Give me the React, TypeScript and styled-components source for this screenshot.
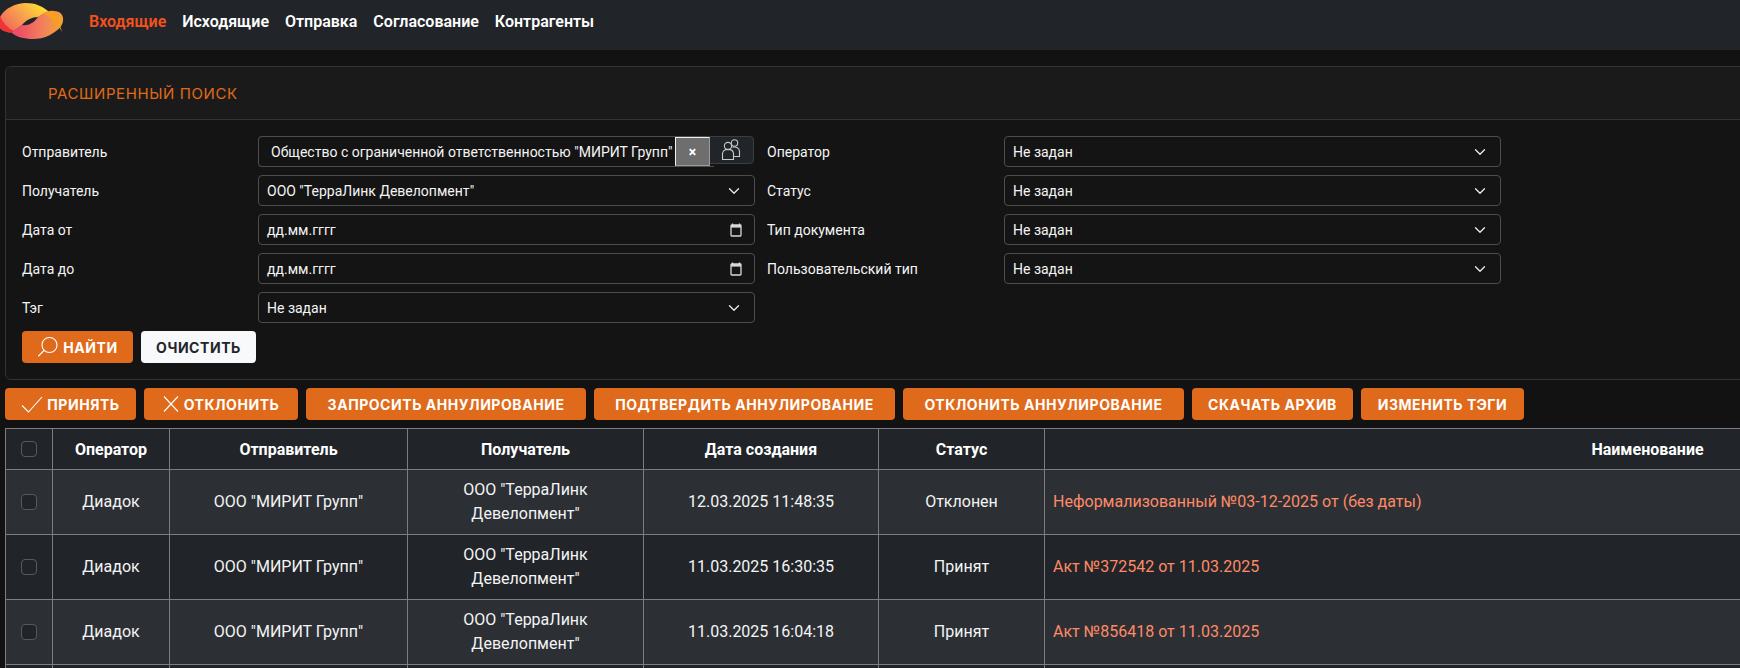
import React from "react";
import styled, { createGlobalStyle } from "styled-components";

const Global = createGlobalStyle`
  html, body { margin: 0; padding: 0; background: #121212; overflow: hidden; height: 100%; }
  body { font-family: Roboto, "Liberation Sans", sans-serif; font-size: 14px; color: #fff; }
  * { box-sizing: border-box; }
`;

const Page = styled.div`
  width: 2260px;
`;

const Navbar = styled.nav`
  height: 50px;
  background: #212529;
  display: flex;
  align-items: center;
`;

const LogoSvg = styled.svg`
  width: 65px;
  height: 40px;
  margin: 0 24px 10px 0;
  flex: none;
`;

const NavList = styled.div`
  display: flex;
  gap: 16px;
  margin-top: -6px;
`;

const NavLink = styled.a<{ $active?: boolean }>`
  font-size: 16px;
  font-weight: 600;
  line-height: 20px;
  color: ${(p) => (p.$active ? "#f4511e" : "#ffffff")};
`;

const Main = styled.main`
  padding: 16px 0 0 5px;
`;

const Card = styled.section`
  border: 1px solid #333333;
  border-radius: 6px 0 0 6px;
  background: #141414;
  height: 314px;
`;

const CardHeader = styled.header`
  height: 53px;
  background: #1a1a1a;
  border-bottom: 1px solid #333333;
  border-radius: 6px 0 0 0;
  padding-left: 42px;
  display: flex;
  align-items: center;
`;

const CardTitle = styled.h2`
  margin: 0;
  font-family: Inter, sans-serif;
  font-weight: 400;
  font-size: 15px;
  letter-spacing: 0.6px;
  color: #e06a1b;
`;

const CardBody = styled.div`
  padding: 16px 0 0 16px;
`;

const FormGrid = styled.div`
  display: grid;
  grid-template-columns: 236px 496.500px 12.500px 237px 496.500px;
  grid-auto-rows: 31px;
  row-gap: 8px;
  align-items: center;
`;

const Label = styled.label<{ $col?: number }>`
  grid-column: ${(p) => p.$col ?? 1};
  font-size: 14px;
  line-height: 20px;
  color: #f4f4f4;
`;

const Select = styled.div<{ $col?: number }>`
  grid-column: ${(p) => p.$col ?? 2};
  height: 31px;
  border: 1px solid #4d4d4d;
  border-radius: 4px;
  background: #141414;
  padding: 0 14px 0 8px;
  display: flex;
  align-items: center;
  justify-content: space-between;
  font-size: 14px;
  color: #f4f4f4;
`;

const DateField = styled(Select)`
  padding-right: 12px;
`;

const Sender = styled.div`
  grid-column: 2;
  height: 31px;
  display: flex;
  position: relative;
`;

const SenderInput = styled.div`
  width: 456px;
  height: 31px;
  border: 1px solid #4d4d4d;
  border-right: none;
  border-radius: 4px 0 0 4px;
  display: flex;
  align-items: center;
  padding-left: 12px;
  font-size: 14px;
  color: #f4f4f4;
  white-space: nowrap;
  overflow: hidden;
`;

const ClearBox = styled.span`
  position: absolute;
  left: 417px;
  top: 1px;
  width: 35px;
  height: 29px;
  background: #6e6e6e;
  border: 1.5px solid;
  border-color: #f2f2f2 #9a9a9a #9a9a9a #f2f2f2;
  color: #fff;
  font-size: 14px;
  font-weight: 700;
  display: flex;
  align-items: center;
  justify-content: center;
`;

const PeopleButton = styled.span`
  width: 47px;
  margin-left: -7px;
  height: 28px;
  background: #212529;
  border: 1px solid #3a3d42;
  border-radius: 0 4px 4px 0;
  display: flex;
  align-items: center;
  justify-content: center;
  position: relative;
  z-index: 0;
`;

const ButtonRow = styled.div<{ $top?: number }>`
  display: flex;
  gap: 8px;
  margin-top: ${(p) => p.$top ?? 0}px;
`;

const Button = styled.button<{ $light?: boolean; $w: number }>`
  width: ${(p) => p.$w}px;
  height: 32px;
  border: none;
  border-radius: 4px;
  background: ${(p) => (p.$light ? "#f8f9fa" : "#e06a1b")};
  color: ${(p) => (p.$light ? "#212529" : "#ffffff")};
  font-family: Inter, sans-serif;
  font-weight: 700;
  font-size: 14px;
  letter-spacing: 0.55px;
  padding: 0;
  display: flex;
  align-items: center;
  justify-content: center;
  gap: 3px;
  white-space: nowrap;
`;

const ActionRow = styled(ButtonRow)`
  margin-top: 8px;
`;

const Table = styled.table`
  margin-top: 8px;
  width: 2246px;
  border-collapse: collapse;
  table-layout: fixed;
`;

const Th = styled.th<{ $w?: number }>`
  width: ${(p) => (p.$w ? `${p.$w}px` : "auto")};
  height: 41px;
  background: #212529;
  border: 1px solid #7b7d80;
  font-size: 16px;
  font-weight: 700;
  text-align: center;
  color: #fff;
  padding: 0 8px;
`;

const Row = styled.tr<{ $alt?: boolean }>`
  background: ${(p) => (p.$alt ? "#2c3035" : "#212529")};
`;

const Td = styled.td<{ $link?: boolean }>`
  height: 65px;
  border: 1px solid #7b7d80;
  padding: 8px;
  font-size: 16px;
  line-height: 24px;
  text-align: ${(p) => (p.$link ? "left" : "center")};
  color: ${(p) => (p.$link ? "#ff8a65" : "#f4f4f4")};
`;

const CheckBox = styled.span`
  display: block;
  width: 16px;
  height: 16px;
  margin: 0 auto;
  border: 1px solid #55585c;
  border-radius: 4px;
  background: #212529;
`;

const Chevron = () => (
  <svg width="12" height="12" viewBox="0 0 16 16" fill="none" stroke="#e8e8e8" strokeWidth="1.8" strokeLinecap="round" strokeLinejoin="round">
    <path d="M2 5l6 6 6-6" />
  </svg>
);

const Calendar = () => (
  <svg width="12" height="14" viewBox="0 0 12 14" fill="none">
    <path d="M2.500 0.500v2M9.500 0.500v2" stroke="#d8d8d8" strokeWidth="1.4" />
    <rect x="1" y="2" width="10" height="11" rx="0.8" stroke="#d8d8d8" strokeWidth="1.3" />
    <rect x="1" y="2" width="10" height="2.600" fill="#d8d8d8" />
  </svg>
);

const People = () => (
  <svg width="24" height="24" viewBox="0 0 24 24" fill="none" stroke="#c9c9c9" strokeWidth="1.1">
    <circle cx="15.500" cy="5" r="3.200" />
    <circle cx="9" cy="8" r="3.600" />
    <path d="M3.500 21.500v-5.500c0-3 2-4.600 5.500-4.600s5.500 1.600 5.500 4.600v5.500z" />
    <path d="M13.500 9.200c3.500-.6 7 .4 7 4.300v5h-6" />
  </svg>
);

const SearchIcon = () => (
  <svg width="22" height="22" viewBox="0 0 22 22" fill="none" stroke="#fff" strokeWidth="1.1" style={{ marginRight: 1 }}>
    <circle cx="12.500" cy="9" r="7.500" />
    <path d="M7 14.500L1.500 20" strokeLinecap="round" />
  </svg>
);

const CheckIcon = () => (
  <svg width="22" height="18" viewBox="0 0 22 18" fill="none" stroke="#fff" strokeWidth="1.1" style={{ marginRight: 1 }}>
    <path d="M1 10.500L7.500 17 21 2" />
  </svg>
);

const CrossIcon = () => (
  <svg width="16" height="18" viewBox="0 0 16 18" fill="none" stroke="#fff" strokeWidth="1.1" style={{ marginRight: 2 }}>
    <path d="M1 1.500L15 16.500M15 1.500L1 16.500" />
  </svg>
);

const Logo = () => (
  <LogoSvg viewBox="0 0 65 40">
    <defs>
      <linearGradient id="lg1" x1="0" y1="0.8" x2="0.9" y2="0.3">
        <stop offset="0" stopColor="#ef6060" />
        <stop offset="0.5" stopColor="#f79a50" />
        <stop offset="1" stopColor="#fdd835" />
      </linearGradient>
      <linearGradient id="lg2" x1="0.15" y1="0.5" x2="1" y2="0.5">
        <stop offset="0" stopColor="#ee4f66" />
        <stop offset="0.6" stopColor="#f2865a" />
        <stop offset="1" stopColor="#f8a52a" />
      </linearGradient>
    </defs>
    <path d="M0 17C5 8 16 3 26 3C35 3 43 6 50 13C45 13 42 15 38 17C32 17 26 20 22 25C18 28 14 31 11 32C5 29 -1 25 0 17z" fill="url(#lg1)" />
    <path d="M11 32C15 30 18 27 22 25C28 26 34 23 38 17C43 13 48 10 54 11C60 11 64 15 63 21C62 28 55 32 50 35C44 38 38 39 33 39C24 39 16 37 11 32z" fill="url(#lg2)" />
    <path d="M0 16C3 23 8 28 14 31L10 33C6 32 0 30 0 28z" fill="#ee3535" />
    <path d="M44 14C47 12 50 11 53 11C56 16 60 24 62 32C58 24 52 18 44 14z" fill="#f9a01e" />
  </LogoSvg>
);

const rows = [
  { date: "12.03.2025 11:48:35", status: "Отклонен", name: "Неформализованный №03-12-2025 от (без даты)" },
  { date: "11.03.2025 16:30:35", status: "Принят", name: "Акт №372542 от 11.03.2025" },
  { date: "11.03.2025 16:04:18", status: "Принят", name: "Акт №856418 от 11.03.2025" },
];

export default function App() {
  return (
    <Page>
      <Global />
      <Navbar>
        <Logo />
        <NavList>
          <NavLink $active>Входящие</NavLink>
          <NavLink>Исходящие</NavLink>
          <NavLink>Отправка</NavLink>
          <NavLink>Согласование</NavLink>
          <NavLink>Контрагенты</NavLink>
        </NavList>
      </Navbar>
      <Main>
        <Card>
          <CardHeader>
            <CardTitle>РАСШИРЕННЫЙ ПОИСК</CardTitle>
          </CardHeader>
          <CardBody>
            <FormGrid>
              <Label>Отправитель</Label>
              <Sender>
                <SenderInput>Общество с ограниченной ответственностью "МИРИТ Групп"</SenderInput>
                <PeopleButton><People /></PeopleButton>
                <ClearBox>×</ClearBox>
              </Sender>
              <Label $col={4}>Оператор</Label>
              <Select $col={5}>Не задан<Chevron /></Select>

              <Label>Получатель</Label>
              <Select>ООО "ТерраЛинк Девелопмент"<Chevron /></Select>
              <Label $col={4}>Статус</Label>
              <Select $col={5}>Не задан<Chevron /></Select>

              <Label>Дата от</Label>
              <DateField>дд.мм.гггг<Calendar /></DateField>
              <Label $col={4}>Тип документа</Label>
              <Select $col={5}>Не задан<Chevron /></Select>

              <Label>Дата до</Label>
              <DateField>дд.мм.гггг<Calendar /></DateField>
              <Label $col={4}>Пользовательский тип</Label>
              <Select $col={5}>Не задан<Chevron /></Select>

              <Label>Тэг</Label>
              <Select>Не задан<Chevron /></Select>
            </FormGrid>
            <ButtonRow $top={8}>
              <Button $w={111}><SearchIcon />НАЙТИ</Button>
              <Button $w={115} $light>ОЧИСТИТЬ</Button>
            </ButtonRow>
          </CardBody>
        </Card>
        <ActionRow>
          <Button $w={131}><CheckIcon />ПРИНЯТЬ</Button>
          <Button $w={154}><CrossIcon />ОТКЛОНИТЬ</Button>
          <Button $w={280}>ЗАПРОСИТЬ АННУЛИРОВАНИЕ</Button>
          <Button $w={301}>ПОДТВЕРДИТЬ АННУЛИРОВАНИЕ</Button>
          <Button $w={281}>ОТКЛОНИТЬ АННУЛИРОВАНИЕ</Button>
          <Button $w={161}>СКАЧАТЬ АРХИВ</Button>
          <Button $w={163}>ИЗМЕНИТЬ ТЭГИ</Button>
        </ActionRow>
        <Table>
          <thead>
            <tr>
              <Th $w={47}><CheckBox /></Th>
              <Th $w={117}>Оператор</Th>
              <Th $w={238}>Отправитель</Th>
              <Th $w={236}>Получатель</Th>
              <Th $w={235}>Дата создания</Th>
              <Th $w={166}>Статус</Th>
              <Th>Наименование</Th>
            </tr>
          </thead>
          <tbody>
            {rows.map((r, i) => (
              <Row key={r.date} $alt={i !== 1}>
                <Td><CheckBox /></Td>
                <Td>Диадок</Td>
                <Td>ООО "МИРИТ Групп"</Td>
                <Td>ООО "ТерраЛинк Девелопмент"</Td>
                <Td>{r.date}</Td>
                <Td>{r.status}</Td>
                <Td $link>{r.name}</Td>
              </Row>
            ))}
            <Row>
              <Td /><Td /><Td /><Td /><Td /><Td /><Td />
            </Row>
          </tbody>
        </Table>
      </Main>
    </Page>
  );
}
